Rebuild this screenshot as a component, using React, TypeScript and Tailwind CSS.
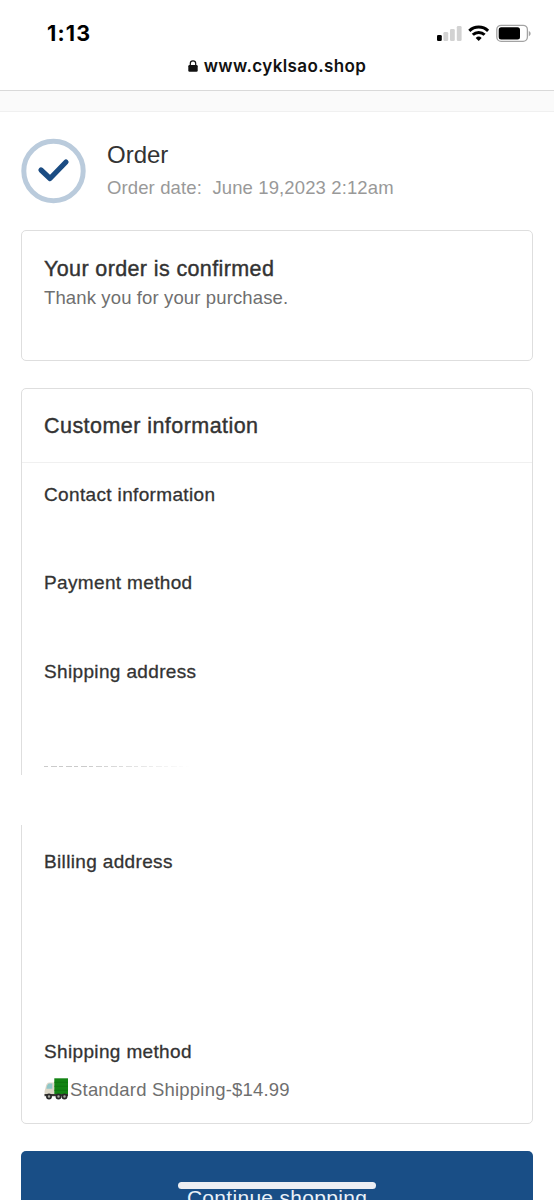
import React from 'react';

const StatusBar: React.FC = () => (
  <div className="flex h-[52px] items-start justify-between pl-[47px] pr-[22px] pt-[21px]">
    <span className="font-['Inter'] text-[21.5px] font-bold leading-6 tracking-[1.2px]">1:13</span>
    <svg width="96" height="24" viewBox="0 0 96 24" className="mt-px block">
      <rect x="1" y="13" width="4.8" height="6" rx="1.3" fill="#000" />
      <rect x="7.4" y="10" width="4.8" height="9" rx="1.3" fill="#d2d2d2" />
      <rect x="14" y="7" width="4.8" height="12" rx="1.3" fill="#d2d2d2" />
      <rect x="20.8" y="4" width="4.8" height="15" rx="1.3" fill="#d2d2d2" />
      <g fill="none" stroke="#000" strokeWidth="3">
        <path d="M33.3 8.8a13.6 13.6 0 0 1 18.8 0" />
        <path d="M36.8 12.8a8.4 8.4 0 0 1 11.8 0" />
      </g>
      <path d="M42.7 19l-3-3.1a4.3 4.3 0 0 1 6 0z" fill="#000" />
      <rect x="60.8" y="3.3" width="30.6" height="16" rx="4.3" fill="none" stroke="#a3a3a3" strokeWidth="1.3" />
      <rect x="62.7" y="5.2" width="21.3" height="12.2" rx="2.5" fill="#000" />
      <path d="M92.8 9c2.4 1 2.4 4.2 0 5.2z" fill="#a3a3a3" />
    </svg>
  </div>
);

const AddressBar: React.FC = () => (
  <div className="flex h-[39px] items-start justify-center border-b border-[#d9d9d9] pt-[3px]">
    <svg width="10" height="12" viewBox="0 0 10 12" className="mr-[6px] mt-[5px]">
      <path d="M2.3 5.5V3.6a2.7 2.7 0 0 1 5.4 0v1.9" fill="none" stroke="#111" strokeWidth="1.2" />
      <rect x="0.3" y="5" width="9.4" height="6.7" rx="1.2" fill="#111" />
    </svg>
    <span className="font-['Inter'] text-[17px] font-semibold leading-[22px] tracking-[0.4px] text-[#111]">
      www.cyklsao.shop
    </span>
  </div>
);

const Truck: React.FC = () => (
  <svg width="25" height="22" viewBox="0 0 25 22" className="mr-px mt-[2px] shrink-0">
    <path d="M10.5 4.5H5.5C3 4.5 2 6.5 1.6 9.5L.6 13v4h9.9z" fill="#ddd8c8" />
    <path d="M8.3 5.5H5.7C3.7 5.5 2.8 7.5 2.4 10.8h5.9z" fill="#8fc6c8" />
    <rect x="10.3" y="0.3" width="13.7" height="16" fill="#138414" />
    <path d="M10.3 4.3H24M10.3 8.3H24M10.3 12.3H24" stroke="#0d700f" strokeWidth="0.7" />
    <path d="M.5 16h23.5v2.2H.5z" fill="#3a3835" />
    <g fill="#a9a9a2" stroke="#292929" strokeWidth="1.7">
      <circle cx="5" cy="18.5" r="2.1" />
      <circle cx="14.5" cy="18.5" r="2.1" />
      <circle cx="20.5" cy="18.5" r="2.1" />
    </g>
  </svg>
);

const SectionTitle: React.FC<{ children: React.ReactNode }> = ({ children }) => (
  <h3 className="text-[19px] leading-6 tracking-[0.35px] [-webkit-text-stroke:0.3px_#333]">{children}</h3>
);

export default function App() {
  return (
    <div className="flex h-[1200px] w-[554px] flex-col overflow-hidden bg-white font-['Liberation_Sans',Arial,sans-serif] text-[#333]">
      <header className="text-black">
        <StatusBar />
        <AddressBar />
      </header>
      <div className="h-[21px] shrink-0 border-b border-[#f0f0f0] bg-[#fafafa]" />

      <main className="flex flex-col px-[21px] pt-[26px]">
        <div className="flex items-start gap-[21px]">
          <svg width="65" height="66" viewBox="0 0 65 66" className="shrink-0">
            <circle cx="32.5" cy="33" r="29.7" fill="none" stroke="#bacbdc" strokeWidth="5" />
            <path d="M20 32l9 8.5L45 24" fill="none" stroke="#1b4c83" strokeWidth="5.2" strokeLinecap="round" strokeLinejoin="round" />
          </svg>
          <div className="pt-[3px]">
            <h1 className="text-[24px] leading-7">Order</h1>
            <p className="mt-[7px] whitespace-pre text-[18.5px] leading-6 tracking-[0.12px] text-[#999]">
              Order date:  June 19,2023 2:12am
            </p>
          </div>
        </div>

        <section className="mt-[26px] h-[131px] rounded-[5px] border border-[#dedede] px-[22px] pt-[26px]">
          <h2 className="text-[21.5px] leading-6 tracking-[0.38px] [-webkit-text-stroke:0.4px_#333]">Your order is confirmed</h2>
          <p className="mt-[5px] text-[18.5px] leading-6 tracking-[0.13px] text-[#6f6f6f]">Thank you for your purchase.</p>
        </section>

        <section className="relative mt-[27px] h-[736px] rounded-[5px] border border-[#dedede]">
          <div className="h-[74px] border-b border-[#f0f0f0] px-[22px] pt-[25px]">
            <h2 className="text-[21.5px] leading-6 tracking-[0.45px] [-webkit-text-stroke:0.4px_#333]">Customer information</h2>
          </div>
          <div className="flex flex-col px-[22px] pt-[20px]">
            <div className="h-[88px]"><SectionTitle>Contact information</SectionTitle></div>
            <div className="h-[89px]"><SectionTitle>Payment method</SectionTitle></div>
            <div className="h-[190px]">
              <SectionTitle>Shipping address</SectionTitle>
              {/* only the edge of the hidden address line shows */}
              <div className="mt-[82px] h-px w-[146px] bg-[repeating-linear-gradient(90deg,#aaa_0_4px,transparent_4px_7px,#aaa_7px_13px,transparent_13px_15px)] opacity-60 [mask-image:linear-gradient(90deg,#000_30%,transparent)]" />
            </div>
            <div className="h-[190px]"><SectionTitle>Billing address</SectionTitle></div>
            <SectionTitle>Shipping method</SectionTitle>
            <div className="mt-[12px] flex text-[18.5px] leading-[28px] tracking-[0.2px] text-[#6f6f6f]">
              <Truck />
              <span>Standard Shipping-$14.99</span>
            </div>
          </div>
          {/* blank strip over the card's left edge */}
          <div className="absolute -left-px top-[386px] h-[50px] w-[3px] bg-white" />
        </section>

        <div className="relative mt-[27px] h-[49px]">
          <button className="block w-full rounded-[5px] bg-[#194e86] pb-[35px] pt-[35px] text-[21px] leading-6 tracking-[0.3px] text-[#e9f1f8]">
            Continue shopping
          </button>
          <div className="absolute left-[157px] top-[31px] h-[7px] w-[198px] rounded-full bg-[#eceef3]" />
        </div>
      </main>
    </div>
  );
}
